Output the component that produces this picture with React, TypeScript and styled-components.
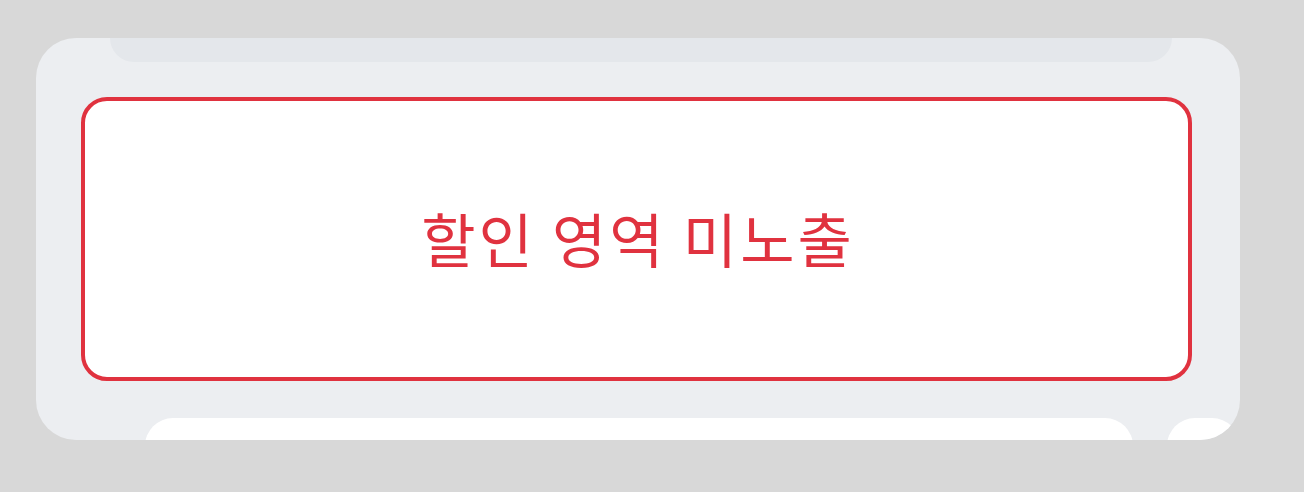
import React from "react";
import styled, { createGlobalStyle } from "styled-components";

const GlobalStyle = createGlobalStyle`
  html, body {
    margin: 0;
    padding: 0;
    background: #d8d8d8;
  }
  body {
    font-family: "Noto Sans CJK KR", "Noto Sans", sans-serif;
  }
`;

const Page = styled.div`
  padding: 38px 64px 52px 36px;
`;

// carousel frame: shows the edge of the previous slide on top and the next ones below
const Frame = styled.div`
  display: flex;
  flex-direction: column;
  height: 402px;
  overflow: hidden;
  border-radius: 40px;
  background: #eceef1;
`;

const PrevEdge = styled.div`
  flex-shrink: 0;
  height: 24px;
  margin: 0 68px 0 74px;
  background: #e4e7eb;
  border-radius: 0 0 28px 28px;
`;

const Notice = styled.div`
  flex-shrink: 0;
  display: flex;
  align-items: center;
  justify-content: center;
  height: 284px;
  box-sizing: border-box;
  margin: 35px 48px 0 45px;
  padding-bottom: 4px;
  background: #ffffff;
  border: 4px solid #e0323f;
  border-radius: 26px;
`;

const NoticeText = styled.span`
  color: #e0323f;
  font-size: 59px;
  font-weight: 400;
  letter-spacing: 3px;
  margin-right: -3px;
`;

const NextRow = styled.div`
  flex-shrink: 0;
  display: flex;
  gap: 34px;
  margin-top: 37px;
  padding-left: 109px;
`;

interface SlideProps {
  width?: number;
}

const NextSlide = styled.div<SlideProps>`
  flex: ${(p) => (p.width ? `0 0 ${p.width}px` : "1")};
  height: 60px;
  background: #ffffff;
  border-radius: 28px 28px 0 0;
`;

const App = () => {
  return (
    <Page>
      <GlobalStyle />
      <Frame>
        <PrevEdge />
        <Notice>
          <NoticeText>할인 영역 미노출</NoticeText>
        </Notice>
        <NextRow>
          <NextSlide width={988} />
          <NextSlide />
        </NextRow>
      </Frame>
    </Page>
  );
};

export default App;
